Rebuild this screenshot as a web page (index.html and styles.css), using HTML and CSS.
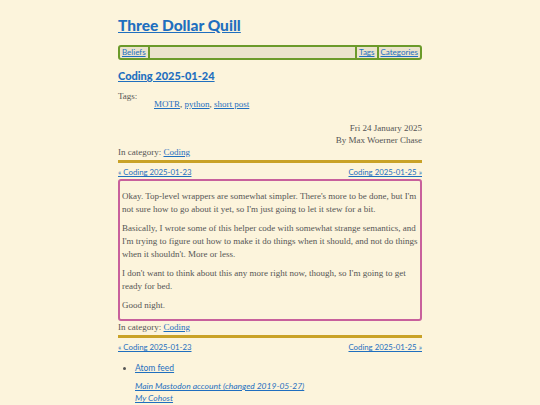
FILE: index.html
```html
<!DOCTYPE html>
<html>
<head>
<meta charset="utf-8">
<link rel="stylesheet" href="styles.css">
</head>
<body>
<div class="page">
  <h1 class="site-title"><a href="#">Three Dollar Quill</a></h1>
  <nav class="navbar">
    <a href="#">Beliefs</a>
    <span class="spacer"></span>
    <a href="#">Tags</a>
    <a href="#">Categories</a>
  </nav>
  <h2 class="post-title"><a href="#">Coding 2025-01-24</a></h2>
  <div class="tags">
    <div class="tags-label">Tags:</div>
    <div class="tags-list"><a href="#">MOTR</a>, <a href="#">python</a>, <a href="#">short post</a></div>
  </div>
  <div class="meta">
    <div>Fri 24 January 2025</div>
    <div>By Max Woerner Chase</div>
  </div>
  <div class="category">In category: <a href="#">Coding</a></div>
  <div class="rule"></div>
  <div class="pager"><a href="#">« Coding 2025-01-23</a><a href="#">Coding 2025-01-25 »</a></div>
  <article class="content">
    <p>Okay. Top-level wrappers are somewhat simpler. There's more to be done, but I'm not sure how to go about it yet, so I'm just going to let it stew for a bit.</p>
    <p>Basically, I wrote some of this helper code with somewhat strange semantics, and I'm trying to figure out how to make it do things when it should, and not do things when it shouldn't. More or less.</p>
    <p>I don't want to think about this any more right now, though, so I'm going to get ready for bed.</p>
    <p>Good night.</p>
  </article>
  <div class="category">In category: <a href="#">Coding</a></div>
  <div class="rule"></div>
  <div class="pager"><a href="#">« Coding 2025-01-23</a><a href="#">Coding 2025-01-25 »</a></div>
  <ul class="feeds"><li><a href="#">Atom feed</a></li></ul>
  <div class="social">
    <a href="#">Main Mastodon account (changed 2019-05-27)</a>
    <a href="#">My Cohost</a>
  </div>
</div>
</body>
</html>
```

FILE: styles.css
```css
html, body {
  margin: 0;
  padding: 0;
  background: #fcf4dc;
}
body {
  font-family: "Liberation Serif", serif;
  color: #555;
  font-size: 9px;
}
a { color: #1f6fbf; }
.page {
  width: 304px;
  margin: 0 auto;
  padding-top: 14px;
}
.site-title {
  font-family: Lato, sans-serif;
  font-weight: 900;
  font-size: 15.5px;
  line-height: 22px;
  margin: 0 0 9px;
}
.navbar {
  display: flex;
  align-items: stretch;
  border: 2px solid #6b9a2a;
  border-radius: 3px;
  background: #ebe3cc;
  font-family: Lato, sans-serif;
  font-size: 8px;
  line-height: 11px;
}
.navbar a { padding: 0 2px; }
.navbar a:first-child { border-right: 2px solid #6b9a2a; }
.navbar .spacer { flex: 1; border-right: 2px solid #6b9a2a; }
.navbar a:nth-child(3) { border-right: 2px solid #6b9a2a; }
.post-title {
  font-family: Lato, sans-serif;
  font-weight: 900;
  font-size: 11px;
  line-height: 16px;
  margin: 8px 0 7px;
}
.tags-label { line-height: 10px; }
.tags-list { padding-left: 36px; line-height: 10px; margin-top: -2px; }
.meta { text-align: right; line-height: 12px; margin-top: 13px; }
.category { line-height: 12px; }
.rule { border-top: 3px solid #c9a227; margin: 2px 0 3px; }
.pager {
  display: flex;
  justify-content: space-between;
  font-family: Lato, sans-serif;
  font-size: 7.8px;
  line-height: 13px;
}
.content {
  border: 2px solid #c8609c;
  border-radius: 3px;
  padding: 3px 2px 1px;
}
.content p { margin: 6px 0; line-height: 13px; }
.feeds { margin: 8px 0 6px; padding-left: 17px; font-family: Lato, sans-serif; font-size: 8.5px; line-height: 12px; }
.social { display: flex; flex-direction: column; padding-left: 17px; font-family: Lato, sans-serif; font-size: 8.5px; font-style: italic; line-height: 12px; }
.social a { align-self: flex-start; }
```
